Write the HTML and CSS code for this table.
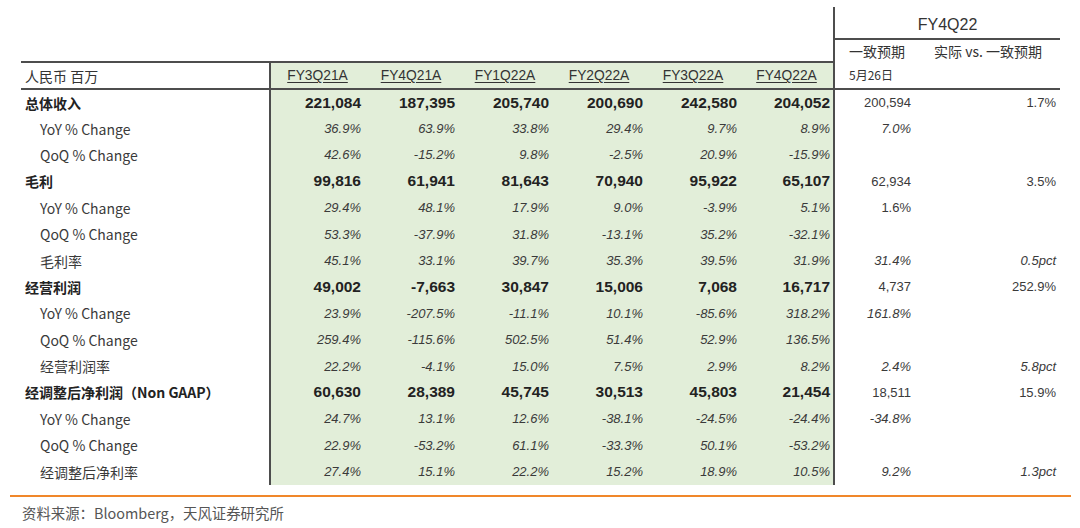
FILE: index.html
```html
<!DOCTYPE html>
<html lang="zh-CN">
<head>
<meta charset="utf-8">
<link rel="stylesheet" href="styles.css">
</head>
<body>
<div class="page">
<table class="fin">
<colgroup><col class="c-label"><col class="c-q" span="6"><col class="c-est"><col class="c-vs"></colgroup>
<tr class="r-top"><td colspan="7"></td><td colspan="2" class="est fy">FY4Q22</td></tr>
<tr class="r-sub"><td colspan="7"></td><td class="est sublbl">一致预期</td><td class="vs-h">实际 vs. 一致预期</td></tr>
<tr class="r-head">
<td class="lbl unit">人民币 百万</td>
<td class="g gl qh"><span>FY3Q21A</span></td><td class="g qh"><span>FY4Q21A</span></td><td class="g qh"><span>FY1Q22A</span></td><td class="g qh"><span>FY2Q22A</span></td><td class="g qh"><span>FY3Q22A</span></td><td class="g qh"><span>FY4Q22A</span></td>
<td class="est date">5月26日</td><td class="vs"></td>
</tr>
<tr class="r-main"><td class="lbl main">总体收入</td><td class="g gl b">221,084</td><td class="g b">187,395</td><td class="g b">205,740</td><td class="g b">200,690</td><td class="g b">242,580</td><td class="g b">204,052</td><td class="est n">200,594</td><td class="vs n">1.7%</td></tr>
<tr><td class="lbl sub">YoY % Change</td><td class="g gl i">36.9%</td><td class="g i">63.9%</td><td class="g i">33.8%</td><td class="g i">29.4%</td><td class="g i">9.7%</td><td class="g i">8.9%</td><td class="est i">7.0%</td><td class="vs"></td></tr>
<tr><td class="lbl sub">QoQ % Change</td><td class="g gl i">42.6%</td><td class="g i">-15.2%</td><td class="g i">9.8%</td><td class="g i">-2.5%</td><td class="g i">20.9%</td><td class="g i">-15.9%</td><td class="est"></td><td class="vs"></td></tr>
<tr class="r-main"><td class="lbl main">毛利</td><td class="g gl b">99,816</td><td class="g b">61,941</td><td class="g b">81,643</td><td class="g b">70,940</td><td class="g b">95,922</td><td class="g b">65,107</td><td class="est n">62,934</td><td class="vs n">3.5%</td></tr>
<tr><td class="lbl sub">YoY % Change</td><td class="g gl i">29.4%</td><td class="g i">48.1%</td><td class="g i">17.9%</td><td class="g i">9.0%</td><td class="g i">-3.9%</td><td class="g i">5.1%</td><td class="est n">1.6%</td><td class="vs"></td></tr>
<tr><td class="lbl sub">QoQ % Change</td><td class="g gl i">53.3%</td><td class="g i">-37.9%</td><td class="g i">31.8%</td><td class="g i">-13.1%</td><td class="g i">35.2%</td><td class="g i">-32.1%</td><td class="est"></td><td class="vs"></td></tr>
<tr><td class="lbl sub">毛利率</td><td class="g gl i">45.1%</td><td class="g i">33.1%</td><td class="g i">39.7%</td><td class="g i">35.3%</td><td class="g i">39.5%</td><td class="g i">31.9%</td><td class="est i">31.4%</td><td class="vs i">0.5pct</td></tr>
<tr class="r-main"><td class="lbl main">经营利润</td><td class="g gl b">49,002</td><td class="g b">-7,663</td><td class="g b">30,847</td><td class="g b">15,006</td><td class="g b">7,068</td><td class="g b">16,717</td><td class="est n">4,737</td><td class="vs n">252.9%</td></tr>
<tr><td class="lbl sub">YoY % Change</td><td class="g gl i">23.9%</td><td class="g i">-207.5%</td><td class="g i">-11.1%</td><td class="g i">10.1%</td><td class="g i">-85.6%</td><td class="g i">318.2%</td><td class="est i">161.8%</td><td class="vs"></td></tr>
<tr><td class="lbl sub">QoQ % Change</td><td class="g gl i">259.4%</td><td class="g i">-115.6%</td><td class="g i">502.5%</td><td class="g i">51.4%</td><td class="g i">52.9%</td><td class="g i">136.5%</td><td class="est"></td><td class="vs"></td></tr>
<tr><td class="lbl sub">经营利润率</td><td class="g gl i">22.2%</td><td class="g i">-4.1%</td><td class="g i">15.0%</td><td class="g i">7.5%</td><td class="g i">2.9%</td><td class="g i">8.2%</td><td class="est i">2.4%</td><td class="vs i">5.8pct</td></tr>
<tr class="r-main"><td class="lbl main">经调整后净利润（Non GAAP）</td><td class="g gl b">60,630</td><td class="g b">28,389</td><td class="g b">45,745</td><td class="g b">30,513</td><td class="g b">45,803</td><td class="g b">21,454</td><td class="est n">18,511</td><td class="vs n">15.9%</td></tr>
<tr><td class="lbl sub">YoY % Change</td><td class="g gl i">24.7%</td><td class="g i">13.1%</td><td class="g i">12.6%</td><td class="g i">-38.1%</td><td class="g i">-24.5%</td><td class="g i">-24.4%</td><td class="est i">-34.8%</td><td class="vs"></td></tr>
<tr><td class="lbl sub">QoQ % Change</td><td class="g gl i">22.9%</td><td class="g i">-53.2%</td><td class="g i">61.1%</td><td class="g i">-33.3%</td><td class="g i">50.1%</td><td class="g i">-53.2%</td><td class="est"></td><td class="vs"></td></tr>
<tr><td class="lbl sub">经调整后净利率</td><td class="g gl i">27.4%</td><td class="g i">15.1%</td><td class="g i">22.2%</td><td class="g i">15.2%</td><td class="g i">18.9%</td><td class="g i">10.5%</td><td class="est i">9.2%</td><td class="vs i">1.3pct</td></tr>
</table>
<div class="rule"></div>
<p class="source">资料来源：Bloomberg，天风证券研究所</p>
</div>
</body>
</html>
```

FILE: styles.css
```css
html, body {
  margin: 0;
  padding: 0;
  background: #ffffff;
}

.page {
  width: 1080px;
  height: 528px;
  overflow: hidden;
  font-family: "Liberation Sans", "Noto Sans CJK SC", sans-serif;
  color: #2f2f2f;
}

.fin {
  border-collapse: collapse;
  table-layout: fixed;
  width: 1039px;
  margin: 7px 0 0 21px;
}

.c-label { width: 249px; }
.c-q { width: 94px; }
.c-est { width: 80px; }
.c-vs { width: 146px; }

.fin td {
  padding: 0;
  white-space: nowrap;
  overflow: hidden;
  vertical-align: middle;
}

.fin tr { height: 26.4px; }
.fin tr.r-top { height: 32px; }
.fin tr.r-sub { height: 23px; }
.fin tr.r-head { height: 27px; }

.r-head td {
  border-bottom: 2px solid #4d4d4d;
}
.r-head td.lbl,
.r-head td.g {
  border-top: 2px solid #4d4d4d;
}

.est {
  border-left: 2px solid #4d4d4d;
  text-align: right;
  padding-right: 3px !important;
}

.fy {
  text-align: center !important;
  font-size: 16px;
  color: #333;
  border-bottom: 2px solid #4d4d4d;
  padding-right: 0 !important;
  padding-top: 4px !important;
}

.sublbl, .date {
  text-align: left !important;
  padding-left: 14px !important;
  font-family: "Noto Sans CJK SC", "Liberation Sans", sans-serif;
  color: #333;
}
.sublbl { font-size: 14px; }
.date { font-size: 12px; padding-bottom: 2px !important; }

.vs-h {
  text-align: center;
  font-family: "Noto Sans CJK SC", "Liberation Sans", sans-serif;
  font-size: 14px;
  color: #333;
  padding-left: 2px !important;
}

.vs {
  text-align: right;
  padding-right: 4px !important;
}

.lbl {
  font-family: "Noto Sans CJK SC", "Liberation Sans", sans-serif;
  font-size: 14px;
  color: #333;
}
.lbl.unit { padding-left: 4px; }
.lbl.main { padding-left: 4px; font-weight: 700; color: #222; }
.lbl.sub { padding-left: 19px; color: #3a3a3a; }

.g {
  background: #e2eed9;
  text-align: right;
  padding-right: 3px !important;
}
.gl { border-left: 2px solid #4d4d4d; }

.qh {
  text-align: center !important;
  padding-right: 0 !important;
  font-size: 13.8px;
  color: #333;
}
.qh span {
  text-decoration: underline;
  text-underline-offset: 2px;
}

.b {
  font-weight: 700;
  font-size: 15.5px;
  color: #222;
}

.i {
  font-style: italic;
  font-size: 13px;
  color: #3a3a3a;
}

.n {
  font-size: 13px;
  color: #3a3a3a;
}

.rule {
  height: 2px;
  background: #f0872a;
  margin: 10px 9px 0 10px;
}

.source {
  margin: 6px 0 0 22px;
  font-family: "Noto Sans CJK SC", "Liberation Sans", sans-serif;
  font-size: 14.4px;
  line-height: 20px;
  color: #555;
}
```
